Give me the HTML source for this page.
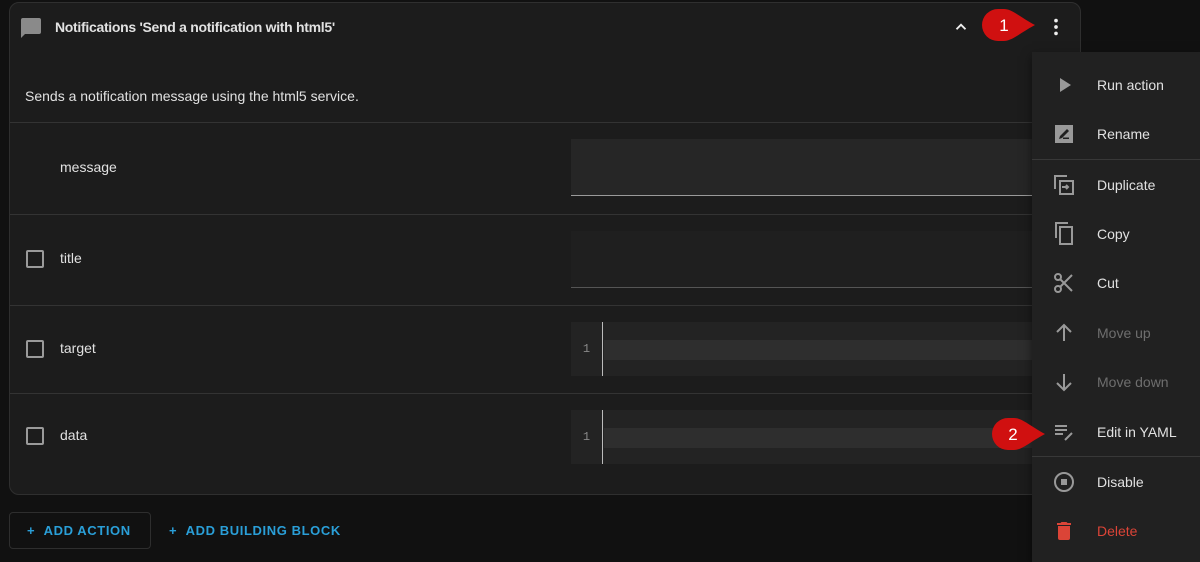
<!DOCTYPE html>
<html><head><style>
*{box-sizing:border-box;margin:0;padding:0}
body{width:1200px;height:562px;background:#111;font-family:"Liberation Sans",sans-serif;position:relative;overflow:hidden;color:#e1e1e1}
.card{position:absolute;left:9px;top:2px;width:1072px;height:493px;background:#1c1c1c;border:1px solid #2f2f2f;border-radius:10px;overflow:hidden}
.abs{position:absolute}
.sep{position:absolute;left:0;right:0;height:1px;background:#333}
.lbl{position:absolute;font-size:14px;color:#e1e1e1}
.cb{position:absolute;left:16px;width:18px;height:18px;border:2px solid #9a9a9a;border-radius:2px}
.inp{position:absolute;left:561px;right:0;background:#262626;border-bottom:1px solid #9a9a9a}
.code{position:absolute;left:561px;right:0;height:54px;background:#232323}
.code .g{position:absolute;left:0;top:0;width:32px;height:54px;border-right:1px solid #bbb;color:#888;font-size:12px;text-align:center;line-height:54px;font-family:"Liberation Mono",monospace}
.code .ln{position:absolute;left:33px;right:0;top:18px;height:20px;background:#2e2e2e}
.menu{position:absolute;left:1032px;top:52px;width:168px;height:510px;background:#212121;box-shadow:0 4px 10px rgba(0,0,0,.5)}
.mi{position:absolute;left:0;right:0;height:49px;font-size:14px}
.mi span{position:absolute;left:65px;top:50%;transform:translateY(-50%)}
.mi svg{position:absolute;left:20px;top:50%;transform:translateY(-50%)}
.msep{position:absolute;left:0;right:0;height:1px;background:#383838}
.pin{position:absolute;width:54px;height:34px}
.btn{position:absolute;color:#2a9fd8;font-size:13px;font-weight:bold;letter-spacing:0.6px}
</style></head><body>
<div class="card">
 <svg class="abs" style="left:9px;top:13px" width="24" height="24" viewBox="0 0 24 24"><path fill="#8a8a8a" d="M20 2H4a2 2 0 0 0-2 2v18l4-4h14a2 2 0 0 0 2-2V4a2 2 0 0 0-2-2z"/></svg>
 <div class="lbl" style="left:45px;top:16px;font-weight:bold;font-size:14px;letter-spacing:-0.3px">Notifications 'Send a notification with html5'</div>
 <svg class="abs" style="left:942px;top:15px" width="18" height="18" viewBox="0 0 24 24"><path fill="none" stroke="#eee" stroke-width="2.5" d="M6 15l6-6 6 6"/></svg>
 <svg class="abs" style="left:1035px;top:13px" width="22" height="22" viewBox="0 0 24 24"><circle cx="12" cy="5" r="2" fill="#eee"/><circle cx="12" cy="12" r="2" fill="#eee"/><circle cx="12" cy="19" r="2" fill="#eee"/></svg>
 <div class="lbl" style="left:15px;top:85px">Sends a notification message using the html5 service.</div>
 <div class="sep" style="top:119px"></div>
 <div class="lbl" style="left:50px;top:156px">message</div>
 <div class="inp" style="top:136px;height:57px"></div>
 <div class="sep" style="top:211px"></div>
 <div class="cb" style="top:247px"></div>
 <div class="lbl" style="left:50px;top:247px">title</div>
 <div class="inp" style="top:228px;height:57px;background:#1f1f1f;border-bottom-color:#555"></div>
 <div class="sep" style="top:302px"></div>
 <div class="cb" style="top:337px"></div>
 <div class="lbl" style="left:50px;top:337px">target</div>
 <div class="code" style="top:319px"><div class="g">1</div><div class="ln"></div></div>
 <div class="sep" style="top:390px"></div>
 <div class="cb" style="top:424px"></div>
 <div class="lbl" style="left:50px;top:424px">data</div>
 <div class="code" style="top:407px"><div class="g">1</div><div class="ln"></div></div>
</div>
<div class="abs" style="left:9px;top:512px;width:142px;height:37px;border:1px solid #2e2e2e;border-radius:4px"></div>
<div class="btn" style="left:27px;top:523px">+&nbsp;&nbsp;ADD ACTION</div>
<div class="btn" style="left:169px;top:523px">+&nbsp;&nbsp;ADD BUILDING BLOCK</div>

<div class="menu">
 <div class="mi" style="top:8px"><svg width="24" height="24" viewBox="0 0 24 24"><path fill="#999" d="M8 5v14l11-7z"/></svg><span>Run action</span></div>
 <div class="mi" style="top:57px"><svg width="24" height="24" viewBox="0 0 24 24"><path fill="#999" d="M3 3h18v18H3z"/><path fill="#212121" d="M7 17l1-3 7-7 2 2-7 7zM11 17h6v-1.5h-6z"/></svg><span>Rename</span></div>
 <div class="msep" style="top:107px"></div>
 <div class="mi" style="top:108px"><svg width="24" height="24" viewBox="0 0 24 24"><path fill="none" stroke="#999" stroke-width="2" d="M15 3H3v13M8 8h13v13H8zM10 14h6M14 12l2 2-2 2"/></svg><span>Duplicate</span></div>
 <div class="mi" style="top:157px"><svg width="24" height="24" viewBox="0 0 24 24"><path fill="none" stroke="#999" stroke-width="2" d="M16 1H4v15M8 5h12v17H8z"/></svg><span>Copy</span></div>
 <div class="mi" style="top:206px"><svg width="24" height="24" viewBox="0 0 24 24"><circle cx="6" cy="6" r="3" fill="none" stroke="#999" stroke-width="2"/><circle cx="6" cy="18" r="3" fill="none" stroke="#999" stroke-width="2"/><path stroke="#999" stroke-width="2" d="M8 8l12 12M8 16L20 4"/></svg><span>Cut</span></div>
 <div class="mi" style="top:256px;color:#6e6e6e"><svg width="24" height="24" viewBox="0 0 24 24"><path fill="none" stroke="#999" stroke-width="2" d="M12 20V4M5 11l7-7 7 7"/></svg><span>Move up</span></div>
 <div class="mi" style="top:305px;color:#6e6e6e"><svg width="24" height="24" viewBox="0 0 24 24"><path fill="none" stroke="#999" stroke-width="2" d="M12 4v16M5 13l7 7 7-7"/></svg><span>Move down</span></div>
 <div class="mi" style="top:355px"><svg width="24" height="24" viewBox="0 0 24 24"><path stroke="#999" stroke-width="2" d="M3 6h12M3 10h12M3 14h8M13 20l7-7"/></svg><span>Edit in YAML</span></div>
 <div class="msep" style="top:404px"></div>
 <div class="mi" style="top:405px"><svg width="24" height="24" viewBox="0 0 24 24"><circle cx="12" cy="12" r="9" fill="none" stroke="#999" stroke-width="2"/><rect x="9" y="9" width="6" height="6" fill="#999"/></svg><span>Disable</span></div>
 <div class="mi" style="top:454px;color:#db4437"><svg width="24" height="24" viewBox="0 0 24 24"><path fill="#db4437" d="M6 19a2 2 0 0 0 2 2h8a2 2 0 0 0 2-2V7H6zM19 4h-3.5l-1-1h-5l-1 1H5v2h14z"/></svg><span>Delete</span></div>
</div>

<svg class="pin" style="left:981px;top:8px" viewBox="0 0 54 34"><path fill="#d01010" d="M17 1h6c8 0 16 8 31 16-15 8-23 16-31 16h-6A16 16 0 0 1 17 1z"/><text x="23" y="23" fill="#fff" font-size="17" font-family="Liberation Sans" text-anchor="middle">1</text></svg>
<svg class="pin" style="left:991px;top:417px" viewBox="0 0 54 34"><path fill="#d01010" d="M17 1h6c8 0 16 8 31 16-15 8-23 16-31 16h-6A16 16 0 0 1 17 1z"/><text x="22" y="23" fill="#fff" font-size="17" font-family="Liberation Sans" text-anchor="middle">2</text></svg>
</body></html>
